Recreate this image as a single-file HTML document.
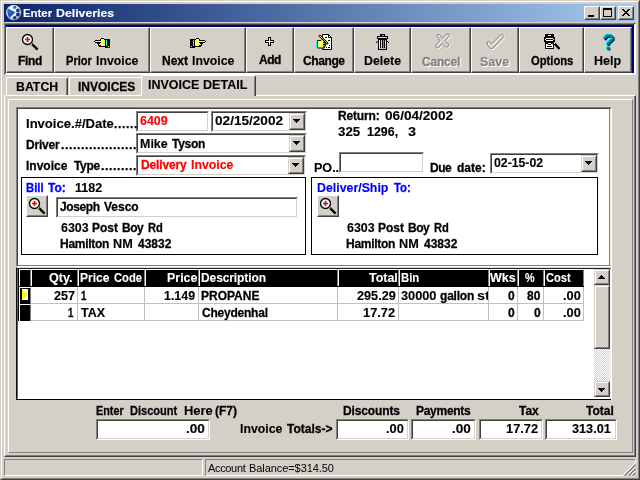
<!DOCTYPE html>
<html><head><meta charset="utf-8"><title>Enter Deliveries</title>
<style>
html,body{margin:0;padding:0;}
body{width:640px;height:480px;overflow:hidden;background:#d4d0c8;position:relative;font-family:"Liberation Sans",sans-serif;font-size:12px;font-weight:bold;color:#000;}
div,span,i,b{position:absolute;box-sizing:border-box;white-space:pre;display:block;}
span{line-height:14px;height:14px;transform-origin:0 0;-webkit-text-stroke:0.12px;}
.tb{top:27px;height:46px;background:#d4d0c8;border-left:1px solid #fff;border-top:1px solid #fff;border-right:1px solid #404040;border-bottom:1px solid #404040;}
.tb:before{content:"";position:absolute;left:0;top:0;right:0;bottom:0;border-right:1px solid #808080;border-bottom:1px solid #808080;}
.dis{text-shadow:1px 1px 0 #fff,1px 1px 0 #fff;}
.cb{width:16px;height:14px;top:6px;background:#d4d0c8;border:1px solid;border-color:#fff #404040 #404040 #fff;}
.cb:before{content:"";position:absolute;left:0;top:0;right:0;bottom:0;border:1px solid;border-color:#d4d0c8 #808080 #808080 #d4d0c8;}
.sunk{border:1px solid;border-color:#808080 #fff #fff #808080;background:#fff;}
.sunk:before{content:"";position:absolute;left:0;top:0;right:0;bottom:0;border:1px solid;border-color:#404040 #d4d0c8 #d4d0c8 #404040;}
.dd{width:16px;background:#d4d0c8;border:1px solid;border-color:#d4d0c8 #404040 #404040 #d4d0c8;}
.dd:before{content:"";position:absolute;left:0;top:0;right:0;bottom:0;border:1px solid;border-color:#fff #808080 #808080 #fff;}
.dd:after{content:"";position:absolute;left:6px;top:9px;width:1px;height:1px;background:#000;box-shadow:-1px -1px #000,0px -1px #000,1px -1px #000,-2px -2px #000,-1px -2px #000,0px -2px #000,1px -2px #000,2px -2px #000,-3px -3px #000,-2px -3px #000,-1px -3px #000,0px -3px #000,1px -3px #000,2px -3px #000,3px -3px #000;}
.th{width:16px;background:#d4d0c8;border:1px solid;border-color:#d4d0c8 #404040 #404040 #d4d0c8;}
.th:before{content:"";position:absolute;left:0;top:0;right:0;bottom:0;border:1px solid;border-color:#fff #808080 #808080 #fff;}
.cd:after{top:8px}
.up:after{top:5px;box-shadow:-1px 1px #000,0px 1px #000,1px 1px #000,-2px 2px #000,-1px 2px #000,0px 2px #000,1px 2px #000,2px 2px #000,-3px 3px #000,-2px 3px #000,-1px 3px #000,0px 3px #000,1px 3px #000,2px 3px #000,3px 3px #000;}
.bx{border:1px solid #000;background:#fff;}
.mb{width:22px;height:22px;background:#d4d0c8;border:1px solid;border-color:#fff #404040 #404040 #fff;}
.mb:before{content:"";position:absolute;left:0;top:0;right:0;bottom:0;border:1px solid;border-color:#d4d0c8 #808080 #808080 #d4d0c8;}
.hc{top:269px;height:18px;background:#000;border-left:1px solid #fff;border-top:1px solid #fff;border-right:1px solid #808080;}
.vl{width:1px;background:#c0c0c0;top:287px;height:34px;}
.hl{height:1px;background:#c0c0c0;left:31px;width:553px;}
</style></head><body>
<!-- window frame -->
<div style="left:0;top:0;width:640px;height:480px;border:1px solid;border-color:#d4d0c8 #404040 #404040 #d4d0c8;"></div>
<div style="left:1px;top:1px;width:638px;height:478px;border:1px solid;border-color:#fff #808080 #808080 #fff;"></div>
<!-- title bar -->
<div style="left:4px;top:4px;width:632px;height:18px;background:linear-gradient(90deg,#0a246a,#a6caf0);"></div>
<svg style="position:absolute;left:5px;top:4px" width="18" height="18" viewBox="5 4 18 18"><defs><radialGradient id="sg" cx="35%" cy="30%" r="75%"><stop offset="0" stop-color="#fff"/><stop offset=".6" stop-color="#e8ecf2"/><stop offset="1" stop-color="#8e98a8"/></radialGradient><linearGradient id="tg" x1="0" y1="0" x2="1" y2="1"><stop offset="0" stop-color="#3a7ada"/><stop offset="1" stop-color="#0c3a96"/></linearGradient></defs><circle cx="13.7" cy="12.6" r="7.6" fill="url(#sg)"/><path d="M7.700 8.300L15.300 12.300L9.300 17.900Q6.200 13 7.700 8.300Z" fill="url(#tg)"/><circle cx="14.700" cy="7.300" r="1.600" fill="#2a68c8"/><circle cx="17.900" cy="10.500" r="1.900" fill="#123f98"/><circle cx="17.900" cy="14.500" r="1.900" fill="#0c3484"/><circle cx="14.700" cy="17.700" r="1.700" fill="#0c3888"/></svg>
<div class="cb" style="left:584px;"><i style="left:3px;top:8px;width:6px;height:2px;background:#000"></i></div>
<div class="cb" style="left:600px;"><i style="left:2px;top:1px;width:9px;height:9px;border:1px solid #000;border-top-width:2px"></i></div>
<div class="cb" style="left:618px;"><svg style="position:absolute;left:3px;top:2px" width="8" height="7" viewBox="0 0 8 7"><path d="M0 0L7 7M1 0L8 7M7 0L0 7M8 0L1 7" stroke="#000" stroke-width="1" shape-rendering="crispEdges" fill="none"/></svg></div>
<!-- toolbar -->
<div style="left:4px;top:23px;width:632px;height:52px;background:#000080;border:2px solid #fff;border-top-color:#404040;border-left-color:#404040;"></div>
<div style="left:4px;top:23px;width:630px;height:1px;background:#808080"></div>
<div style="left:4px;top:23px;width:1px;height:50px;background:#808080"></div>
<div class="tb" style="left:6px;width:48px;"></div>
<div class="tb" style="left:54px;width:96px;"></div>
<div class="tb" style="left:150px;width:96px;"></div>
<div class="tb" style="left:246px;width:48px;"></div>
<div class="tb" style="left:294px;width:60px;"></div>
<div class="tb" style="left:354px;width:57px;"></div>
<div class="tb" style="left:411px;width:60px;"></div>
<div class="tb" style="left:471px;width:48px;"></div>
<div class="tb" style="left:519px;width:65px;"></div>
<div class="tb" style="left:584px;width:48px;"></div>
<!-- tabs -->
<div style="left:6px;top:77px;width:62px;height:18px;border-left:1px solid #fff;border-top:1px solid #fff;border-right:1px solid #404040;border-top-left-radius:2px;border-top-right-radius:2px;"><i style="right:0;top:1px;width:1px;height:17px;background:#808080"></i></div>
<div style="left:69px;top:77px;width:74px;height:18px;border-left:1px solid #fff;border-top:1px solid #fff;border-top-left-radius:2px;"></div>
<!-- tab panel -->
<div style="left:4px;top:95px;width:632px;height:362px;border:1px solid;border-color:#fff #404040 #404040 #fff;"><i style="left:0;top:0;right:0;bottom:0;border-right:1px solid #808080;border-bottom:1px solid #808080"></i></div>
<div style="left:141px;top:75px;width:115px;height:21px;background:#d4d0c8;border-left:1px solid #fff;border-top:1px solid #fff;border-right:1px solid #404040;border-top-left-radius:2px;border-top-right-radius:2px;"><i style="right:0;top:1px;width:1px;height:19px;background:#808080"></i></div>
<!-- inner panel -->
<div style="left:8px;top:99px;width:625px;height:354px;border:1px solid;border-color:#fff #808080 #808080 #fff;"></div>
<!-- upper box -->
<div style="left:16px;top:107px;width:596px;height:160px;background:#fff;border:1px solid;border-color:#808080 #fff #fff #808080;"><i style="left:0;top:0;right:0;bottom:0;border:1px solid;border-color:#404040 #ece9e2 #808080 #404040"></i><i style="right:1px;top:1px;bottom:0px;width:1px;background:#808080"></i></div>
<div class="sunk" style="left:136px;top:111px;width:73px;height:21px"></div>
<div class="sunk" style="left:211px;top:111px;width:96px;height:21px"><div class="dd cd" style="right:1px;top:1px;height:17px"></div></div>
<div class="sunk" style="left:136px;top:133px;width:171px;height:21px"><div class="dd cd" style="right:1px;top:1px;height:17px"></div></div>
<div class="sunk" style="left:136px;top:155px;width:170px;height:21px"><div class="dd cd" style="right:1px;top:1px;height:17px"></div></div>
<div class="sunk" style="left:339px;top:152px;width:85px;height:21px"></div>
<div class="sunk" style="left:490px;top:153px;width:109px;height:21px"><div class="dd cd" style="right:1px;top:1px;height:17px"></div></div>
<div class="bx" style="left:21px;top:177px;width:285px;height:78px"></div>
<div class="bx" style="left:311px;top:177px;width:287px;height:78px"></div>
<div class="mb" style="left:26px;top:195px"></div>
<div class="mb" style="left:317px;top:195px"></div>
<div class="sunk" style="left:56px;top:197px;width:242px;height:21px"></div>
<!-- grid -->
<div style="left:16px;top:267px;width:596px;height:133px;background:#fff;border:1px solid;border-color:#e0ddd6 #fff #000 #101010;"><i style="left:0;top:0;right:0;bottom:0;border:1px solid;border-color:#202020 #f4f2ee #fff #606060"></i><i style="right:-1px;bottom:-1px;width:1px;height:1px;background:#fff"></i></div>
<div style="left:18px;top:269px;width:566px;height:18px;background:#000"></div>
<div style="left:18px;top:287px;width:13px;height:34px;background:#000"></div>
<div class="hc" style="left:19px;width:12px;height:17px"></div>
<div class="hc" style="left:31px;width:47px;height:17px"></div>
<div class="hc" style="left:78px;width:67px;height:17px"></div>
<div class="hc" style="left:145px;width:54px;height:17px"></div>
<div class="hc" style="left:199px;width:139px;height:17px"></div>
<div class="hc" style="left:338px;width:61px;height:17px"></div>
<div class="hc" style="left:399px;width:90px;height:17px"></div>
<div class="hc" style="left:489px;width:29px;height:17px"></div>
<div class="hc" style="left:518px;width:26px;height:17px"></div>
<div class="hc" style="left:544px;width:40px;height:17px"></div>
<div class="hc" style="left:19px;top:287px;width:12px;height:17px"></div>
<div class="hc" style="left:19px;top:304px;width:12px;height:17px"></div>
<div style="left:22px;top:289px;width:6px;height:11px;background:#fff"></div>
<svg style="position:absolute;left:22px;top:289px" width="6" height="11" viewBox="0 0 6 11"><path d="M0 0L6 5.500L0 11Z" fill="#ff0"/></svg>
<div class="vl" style="left:77px"></div><div class="vl" style="left:144px"></div><div class="vl" style="left:198px"></div><div class="vl" style="left:337px"></div><div class="vl" style="left:398px"></div><div class="vl" style="left:488px"></div><div class="vl" style="left:517px"></div><div class="vl" style="left:543px"></div><div class="vl" style="left:583px"></div>
<div class="hl" style="top:303px"></div><div class="hl" style="top:320px"></div>
<!-- scrollbar -->
<div style="left:594px;top:269px;width:16px;height:128px;background:#eae8e4;background-image:conic-gradient(#fff 25%,#d4d0c8 0 50%,#fff 0 75%,#d4d0c8 0);background-size:2px 2px;"></div>
<div class="dd up" style="left:594px;top:269px;height:16px"></div>
<div class="th" style="left:594px;top:285px;height:64px"></div>
<div class="dd" style="left:594px;top:381px;height:16px"></div>
<!-- totals -->
<div class="sunk" style="left:96px;top:419px;width:114px;height:21px"></div>
<div class="sunk" style="left:336px;top:419px;width:73px;height:21px"></div>
<div class="sunk" style="left:411px;top:419px;width:65px;height:21px"></div>
<div class="sunk" style="left:479px;top:419px;width:64px;height:21px"></div>
<div class="sunk" style="left:545px;top:419px;width:72px;height:21px"></div>
<!-- status bar -->
<div style="left:4px;top:459px;width:199px;height:17px;border:1px solid;border-color:#808080 #fff #fff #808080"></div>
<div style="left:205px;top:459px;width:431px;height:17px;border:1px solid;border-color:#808080 #fff #fff #808080"></div>
<svg style="position:absolute;left:623px;top:463px" width="13" height="13" viewBox="0 0 13 13" shape-rendering="crispEdges"><rect x="0" y="0" width="13" height="13" fill="#d4d0c8"/><path d="M12 0L0 12M12 4L4 12M12 8L8 12" stroke="#fff" stroke-width="1"/><path d="M12.5 1.5L1.5 12.5M12.5 2.5L2.5 12.5M12.5 5.5L5.5 12.5M12.5 6.5L6.5 12.5M12.5 9.5L9.5 12.5M12.5 10.5L10.5 12.5" stroke="#808080" stroke-width="1" shape-rendering="auto"/></svg>
<!--ICONS_START-->
<!-- Find magnifier (origin 22,34) -->
<svg style="position:absolute;left:21px;top:33px" width="18" height="18" viewBox="0 0 18 18"><circle cx="6.5" cy="6.5" r="5" fill="#f2f8f8" stroke="#000" stroke-width="1.3"/><path d="M4 6.5H9M6.5 4V9" stroke="#f00" stroke-width="1.6"/><path d="M10.6 10.6L16.6 16.6" stroke="#000" stroke-width="2.4"/><rect x="10" y="10.4" width="1.4" height="1.2" fill="#ff0"/></svg>
<!-- Prior hand (94,38) -->
<svg style="position:absolute;left:94px;top:38px" width="16" height="10" viewBox="0 0 16 10" shape-rendering="crispEdges"><rect x="7" y="0" width="3" height="1" fill="#000"/><rect x="6" y="1" width="1" height="1" fill="#000"/><rect x="7" y="1" width="3" height="1" fill="#ffff60"/><rect x="10" y="1" width="1" height="1" fill="#000"/><rect x="1" y="2" width="6" height="1" fill="#000"/><rect x="7" y="2" width="4" height="1" fill="#ffff60"/><rect x="0" y="3" width="1" height="1" fill="#000"/><rect x="1" y="3" width="10" height="1" fill="#ffff60"/><rect x="1" y="4" width="6" height="1" fill="#000"/><rect x="7" y="4" width="4" height="1" fill="#ffff60"/><rect x="3" y="5" width="3" height="1" fill="#000"/><rect x="6" y="5" width="5" height="1" fill="#ffff60"/><rect x="4" y="6" width="1" height="1" fill="#000"/><rect x="5" y="6" width="6" height="1" fill="#ffff60"/><rect x="4" y="7" width="3" height="1" fill="#000"/><rect x="7" y="7" width="4" height="1" fill="#ffff60"/><rect x="5" y="8" width="6" height="1" fill="#000"/><rect x="11" y="1" width="5" height="9" fill="#000"/><rect x="12" y="2" width="1.400" height="6" fill="#0ff"/><rect x="14" y="8" width="1" height="1" fill="#ff0"/></svg>
<!-- Next hand (190,38) mirrored -->
<svg style="position:absolute;left:190px;top:38px" width="16" height="10" viewBox="0 0 16 10" shape-rendering="crispEdges"><g transform="translate(16,0) scale(-1,1)"><rect x="7" y="0" width="3" height="1" fill="#000"/><rect x="6" y="1" width="1" height="1" fill="#000"/><rect x="7" y="1" width="3" height="1" fill="#ffff60"/><rect x="10" y="1" width="1" height="1" fill="#000"/><rect x="1" y="2" width="6" height="1" fill="#000"/><rect x="7" y="2" width="4" height="1" fill="#ffff60"/><rect x="0" y="3" width="1" height="1" fill="#000"/><rect x="1" y="3" width="10" height="1" fill="#ffff60"/><rect x="1" y="4" width="6" height="1" fill="#000"/><rect x="7" y="4" width="4" height="1" fill="#ffff60"/><rect x="3" y="5" width="3" height="1" fill="#000"/><rect x="6" y="5" width="5" height="1" fill="#ffff60"/><rect x="4" y="6" width="1" height="1" fill="#000"/><rect x="5" y="6" width="6" height="1" fill="#ffff60"/><rect x="4" y="7" width="3" height="1" fill="#000"/><rect x="7" y="7" width="4" height="1" fill="#ffff60"/><rect x="5" y="8" width="6" height="1" fill="#000"/><rect x="11" y="1" width="5" height="9" fill="#000"/><rect x="12" y="2" width="1.400" height="6" fill="#0ff"/><rect x="14" y="8" width="1" height="1" fill="#ff0"/></g></svg>
<!-- Add plus (265,37) -->
<svg style="position:absolute;left:265px;top:37px" width="9" height="9" viewBox="0 0 9 9" shape-rendering="crispEdges"><path d="M3 0h3v3h3v3h-3v3h-3v-3h-3v-3h3z" fill="#000"/><path d="M4 1h1v3h3v1h-3v3h-1v-3h-3v-1h3z" fill="#fff"/></svg>
<!-- Change (315,33) -->
<svg style="position:absolute;left:315px;top:33px" width="18" height="18" viewBox="0 0 18 18"><path d="M7.500 1.500h6l3 3v12h-9z" fill="#fff" stroke="#000" stroke-width="1"/><path d="M13.500 1.500v3h3" fill="none" stroke="#000" stroke-width="1"/><path d="M10 4.500h2M13 7.500h2M14 12.500h1M11 14.500h1M13 14.500h2" stroke="#000" stroke-width="1"/><path d="M2.500 7.500h3.500l1-1h2l1 1v1.500h-1.500v.5h2.500v1.500h-2.500v.5h2v1.500h-2v.5h1v1.500h-7z" fill="#ffff60" stroke="#000" stroke-width="1"/><rect x="1" y="8" width="1.400" height="6.500" fill="#0ff"/><path d="M4.500 2.500l8.500 8.500" stroke="#000" stroke-width="2.200"/><path d="M5 3l7.500 7.500" stroke="#ff0" stroke-width="1" stroke-dasharray="1.200 .5"/><rect x="3.600" y="1.600" width="1.500" height="1.500" fill="#f00"/></svg>
<!-- Delete trash (376,34) -->
<svg style="position:absolute;left:375px;top:34px" width="15" height="16" viewBox="0 0 15 16" shape-rendering="crispEdges"><rect x="5" y="0" width="5" height="2" fill="#000"/><rect x="6.5" y="1" width="2" height=".6" fill="#999"/><rect x="2" y="2" width="11" height="3" fill="#000"/><rect x="3" y="3" width="9" height="1" fill="#ddd"/><rect x="3" y="5" width="9" height="11" fill="#000"/><rect x="4" y="6" width="1" height="9" fill="#fff"/><rect x="6" y="6" width="1" height="9" fill="#ccc"/><rect x="8" y="6" width="1" height="9" fill="#888"/><rect x="10" y="6" width="1" height="9" fill="#ccc"/><rect x="4" y="14" width="7" height="1" fill="#bbb"/><rect x="1" y="8" width="1" height="1" fill="#000"/><rect x="2" y="7" width="1" height="1" fill="#000"/><rect x="13" y="8" width="1" height="1" fill="#000"/><rect x="12" y="7" width="1" height="1" fill="#000"/></svg>
<!-- Cancel X (435,34) -->
<svg style="position:absolute;left:434px;top:33px" width="17" height="17" viewBox="0 0 17 17"><path id="cx" d="M2.5 2.5l1.5-1h1.5l3 4l4-4.5h2.5l.5 1.5l-4.5 5l4 4.5l-1.5 2h-2l-3.5-3.5l-4 4.500l-1.500-.5l-1-2l4.500-5z" fill="none" stroke="#fff" stroke-width="1" transform="translate(1,1)"/><path d="M2.5 2.500l1.500-1h1.500l3 4l4-4.500h2.500l.5 1.500l-4.500 5l4 4.500l-1.500 2h-2l-3.500-3.500l-4 4.500l-1.500-.5l-1-2l4.500-5z" fill="none" stroke="#808080" stroke-width="1"/></svg>
<!-- Save check (487,34) -->
<svg style="position:absolute;left:486px;top:33px" width="19" height="17" viewBox="0 0 19 17"><path d="M1.500 9l1-1l3 3l10-10l1.500 1.500v2l-10.500 11h-2l-3.500-4z" fill="none" stroke="#fff" stroke-width="1" transform="translate(1,1)"/><path d="M1.500 9l1-1l3 3l10-10l1.500 1.500v2l-10.500 11h-2l-3.500-4z" fill="none" stroke="#808080" stroke-width="1"/></svg>
<!-- Options (544,34) -->
<svg style="position:absolute;left:544px;top:34px" width="17" height="16" viewBox="0 0 17 16" shape-rendering="crispEdges"><rect x="1" y="0" width="9" height="15" fill="#000"/><rect x="4" y="1" width="3" height="1" fill="#fff"/><rect x="0" y="3" width="11" height="5" fill="#000"/><rect x="2" y="4" width="7" height="1" fill="#fff"/><rect x="2" y="6" width="7" height="1" fill="#fff"/><rect x="1" y="5" width="1" height="1" fill="#fff"/><rect x="9" y="5" width="1" height="1" fill="#fff"/><rect x="2" y="10" width="7" height="4" fill="#fff"/><rect x="4" y="9" width="3" height="1" fill="#fff"/><rect x="4" y="10" width="3" height="1" fill="#000"/><rect x="3" y="12" width="5" height="1" fill="#000"/><path d="M10.500 9.500L15.500 15" stroke="#000" stroke-width="2.400" shape-rendering="auto"/><rect x="10" y="9" width="1.300" height="1.300" fill="#ff0"/></svg>
<!-- Help ? (603,34) -->
<svg style="position:absolute;left:601px;top:32px" width="16" height="21" viewBox="0 0 16 21"><g fill="none" stroke-linecap="butt" stroke-linejoin="miter"><path d="M3 7l3-3.200h4l1.600 1.700v1.500l-4.600 4.500v2" stroke="#000080" stroke-width="2.600" transform="translate(.8,.8)"/><path d="M3 7l3-3.200h4l1.600 1.700v1.500l-4.600 4.500v2" stroke="#0ff" stroke-width="2.600" transform="translate(-.8,-.8)"/><path d="M3 7l3-3.200h4l1.600 1.700v1.500l-4.600 4.500v2" stroke="#008080" stroke-width="2.400"/></g><rect x="6.600" y="15.600" width="2.800" height="2.800" fill="#000080"/><rect x="5.200" y="14.400" width="2.800" height="2.800" fill="#0ff"/><rect x="5.800" y="15" width="2.800" height="2.800" fill="#008080"/></svg>
<!-- small magnifiers -->
<svg style="position:absolute;left:28px;top:197px" width="18" height="18" viewBox="0 0 18 18"><circle cx="6.5" cy="6.5" r="5" fill="#f2f8f8" stroke="#000" stroke-width="1.3"/><path d="M4 6.5H9M6.5 4V9" stroke="#f00" stroke-width="1.6"/><path d="M10.6 10.6L16.6 16.6" stroke="#000" stroke-width="2.4"/><rect x="10" y="10.4" width="1.4" height="1.2" fill="#ff0"/></svg>
<svg style="position:absolute;left:319px;top:197px" width="18" height="18" viewBox="0 0 18 18"><circle cx="6.5" cy="6.5" r="5" fill="#f2f8f8" stroke="#000" stroke-width="1.3"/><path d="M4 6.5H9M6.5 4V9" stroke="#f00" stroke-width="1.6"/><path d="M10.6 10.6L16.6 16.6" stroke="#000" stroke-width="2.4"/><rect x="10" y="10.4" width="1.4" height="1.2" fill="#ff0"/></svg>
<!--ICONS_END-->
<div style="left:0;top:0;width:640px;height:480px;will-change:transform">
<span style="left:22.96px;top:6px;font-size:11px;font-weight:bold;color:#fff;word-spacing:0px;letter-spacing:0px;transform:scaleX(1.0370)">Enter</span>
<span style="left:55.88px;top:6px;font-size:11px;font-weight:bold;color:#fff;word-spacing:0px;letter-spacing:0px;transform:scaleX(1.1200)">Deliveries</span>
<span style="-webkit-text-stroke:0.27px;left:18.00px;top:54px;font-size:12px;font-weight:bold;color:#000;word-spacing:2px;letter-spacing:-0.333px;transform:scaleX(1.0000)">Find</span>
<span style="-webkit-text-stroke:0.27px;left:66.07px;top:54px;font-size:12px;font-weight:bold;color:#000;word-spacing:2px;letter-spacing:0px;transform:scaleX(0.9259)">Prior</span>
<span style="left:95.97px;top:54px;font-size:12px;font-weight:bold;color:#000;word-spacing:2px;letter-spacing:0px;transform:scaleX(1.0250)">Invoice</span>
<span style="-webkit-text-stroke:0.27px;left:162.00px;top:54px;font-size:12px;font-weight:bold;color:#000;word-spacing:2px;letter-spacing:0px;transform:scaleX(1.0000)">Next</span>
<span style="left:191.97px;top:54px;font-size:12px;font-weight:bold;color:#000;word-spacing:2px;letter-spacing:0px;transform:scaleX(1.0250)">Invoice</span>
<span style="-webkit-text-stroke:0.27px;left:303.00px;top:54px;font-size:12px;font-weight:bold;color:#000;word-spacing:2px;letter-spacing:-0.4px;transform:scaleX(1.0000)">Change</span>
<span style="left:363.97px;top:54px;font-size:12px;font-weight:bold;color:#000;word-spacing:2px;letter-spacing:0px;transform:scaleX(1.0286)">Delete</span>
<span style="-webkit-text-stroke:0.27px;left:531.00px;top:54px;font-size:12px;font-weight:bold;color:#000;word-spacing:2px;letter-spacing:0px;transform:scaleX(0.9333)">Options</span>
<span style="left:593.96px;top:54px;font-size:12px;font-weight:bold;color:#000;word-spacing:2px;letter-spacing:0px;transform:scaleX(1.0400)">Help</span>
<span style="-webkit-text-stroke:0.27px;left:259.00px;top:53px;font-size:12px;font-weight:bold;color:#000;word-spacing:2px;letter-spacing:-0.5px;transform:scaleX(1.0000)">Add</span>
<span class="dis" style="-webkit-text-stroke:0.27px;left:422.00px;top:55px;font-size:12px;font-weight:bold;color:#808080;word-spacing:2px;letter-spacing:-0.2px;transform:scaleX(1.0000)">Cancel</span>
<span class="dis" style="left:479.96px;top:55px;font-size:12px;font-weight:bold;color:#808080;word-spacing:2px;letter-spacing:0px;transform:scaleX(1.0370)">Save</span>
<span style="left:15.97px;top:80px;font-size:12px;font-weight:bold;color:#000;word-spacing:2px;letter-spacing:0px;transform:scaleX(1.0256)">BATCH</span>
<span style="-webkit-text-stroke:0.27px;left:78.00px;top:80px;font-size:12px;font-weight:bold;color:#000;word-spacing:2px;letter-spacing:0px;transform:scaleX(1.0000)">INVOICES</span>
<span style="left:147.96px;top:78px;font-size:12px;font-weight:bold;color:#000;word-spacing:2px;letter-spacing:0px;transform:scaleX(1.0417)">INVOICE</span>
<span style="left:202.95px;top:78px;font-size:12px;font-weight:bold;color:#000;word-spacing:2px;letter-spacing:0px;transform:scaleX(1.0488)">DETAIL</span>
<span style="left:25.91px;top:117px;font-size:12px;font-weight:bold;color:#000;word-spacing:2px;letter-spacing:0px;transform:scaleX(1.0886)">Invoice.#/Date</span>
<span style="-webkit-text-stroke:0.27px;left:114.00px;top:117px;font-size:12px;font-weight:bold;color:#000;word-spacing:2px;letter-spacing:0.67px;transform:scaleX(1.0000)">......</span>
<span style="-webkit-text-stroke:0.27px;left:26.00px;top:138px;font-size:12px;font-weight:bold;color:#000;word-spacing:2px;letter-spacing:-0.2px;transform:scaleX(1.0000)">Driver</span>
<span style="-webkit-text-stroke:0.27px;left:61.00px;top:138px;font-size:12px;font-weight:bold;color:#000;word-spacing:2px;letter-spacing:0.67px;transform:scaleX(1.0000)">...................</span>
<span style="-webkit-text-stroke:0.27px;left:26.00px;top:159px;font-size:12px;font-weight:bold;color:#000;word-spacing:2px;letter-spacing:0px;transform:scaleX(1.0000)">Invoice</span>
<span style="-webkit-text-stroke:0.27px;left:74.00px;top:159px;font-size:12px;font-weight:bold;color:#000;word-spacing:2px;letter-spacing:-0.333px;transform:scaleX(1.0000)">Type</span>
<span style="-webkit-text-stroke:0.27px;left:101.00px;top:159px;font-size:12px;font-weight:bold;color:#000;word-spacing:2px;letter-spacing:0.67px;transform:scaleX(1.0000)">.........</span>
<span style="left:140.00px;top:114px;font-size:12px;font-weight:bold;color:#f00;word-spacing:2px;letter-spacing:0px;transform:scaleX(1.0385)">6409</span>
<span style="left:215.00px;top:114px;font-size:12px;font-weight:bold;color:#000;word-spacing:2px;letter-spacing:0px;transform:scaleX(1.1333)">02/15/2002</span>
<span style="left:139.96px;top:137px;font-size:12px;font-weight:bold;color:#000;word-spacing:2px;letter-spacing:0px;transform:scaleX(1.0400)">Mike</span>
<span style="-webkit-text-stroke:0.27px;left:172.00px;top:137px;font-size:12px;font-weight:bold;color:#000;word-spacing:2px;letter-spacing:-0.25px;transform:scaleX(1.0000)">Tyson</span>
<span style="-webkit-text-stroke:0.27px;left:141.00px;top:158px;font-size:12px;font-weight:bold;color:#f00;word-spacing:2px;letter-spacing:-0.143px;transform:scaleX(1.0000)">Delivery</span>
<span style="left:190.97px;top:158px;font-size:12px;font-weight:bold;color:#f00;word-spacing:2px;letter-spacing:0px;transform:scaleX(1.0250)">Invoice</span>
<span style="-webkit-text-stroke:0.27px;left:338.00px;top:109px;font-size:12px;font-weight:bold;color:#000;word-spacing:2px;letter-spacing:-0.167px;transform:scaleX(1.0000)">Return:</span>
<span style="left:385.00px;top:109px;font-size:12px;font-weight:bold;color:#000;word-spacing:2px;letter-spacing:0px;transform:scaleX(1.1333)">06/04/2002</span>
<span style="left:337.89px;top:125px;font-size:12px;font-weight:bold;color:#000;word-spacing:2px;letter-spacing:0px;transform:scaleX(1.1053)">325</span>
<span style="left:366.96px;top:125px;font-size:12px;font-weight:bold;color:#000;word-spacing:2px;letter-spacing:0px;transform:scaleX(1.0357)">1296,</span>
<span style="left:407.80px;top:125px;font-size:12px;font-weight:bold;color:#000;word-spacing:2px;letter-spacing:0px;transform:scaleX(1.2000)">3</span>
<span style="left:313.95px;top:161px;font-size:12px;font-weight:bold;color:#000;word-spacing:2px;letter-spacing:0px;transform:scaleX(1.0455)">PO..</span>
<span style="-webkit-text-stroke:0.27px;left:430.00px;top:161px;font-size:12px;font-weight:bold;color:#000;word-spacing:2px;letter-spacing:-0.5px;transform:scaleX(1.0000)">Due</span>
<span style="-webkit-text-stroke:0.27px;left:457.00px;top:161px;font-size:12px;font-weight:bold;color:#000;word-spacing:2px;letter-spacing:0px;transform:scaleX(1.0000)">date:</span>
<span style="left:494.00px;top:156px;font-size:12px;font-weight:bold;color:#000;word-spacing:2px;letter-spacing:0px;transform:scaleX(1.0208)">02-15-02</span>
<span style="-webkit-text-stroke:0.27px;left:26.06px;top:181px;font-size:12px;font-weight:bold;color:#00f;word-spacing:2px;letter-spacing:0px;transform:scaleX(0.9412)">Bill</span>
<span style="-webkit-text-stroke:0.27px;left:48.00px;top:181px;font-size:12px;font-weight:bold;color:#00f;word-spacing:2px;letter-spacing:0px;transform:scaleX(1.0000)">To:</span>
<span style="left:74.96px;top:181px;font-size:12px;font-weight:bold;color:#000;word-spacing:2px;letter-spacing:0px;transform:scaleX(1.0400)">1182</span>
<span style="-webkit-text-stroke:0.27px;left:60.00px;top:200px;font-size:12px;font-weight:bold;color:#000;word-spacing:2px;letter-spacing:-0.4px;transform:scaleX(1.0000)">Joseph</span>
<span style="-webkit-text-stroke:0.27px;left:104.00px;top:200px;font-size:12px;font-weight:bold;color:#000;word-spacing:2px;letter-spacing:0px;transform:scaleX(1.0000)">Vesco</span>
<span style="left:61.00px;top:221px;font-size:12px;font-weight:bold;color:#000;word-spacing:2px;letter-spacing:0px;transform:scaleX(1.0385)">6303</span>
<span style="-webkit-text-stroke:0.27px;left:92.00px;top:221px;font-size:12px;font-weight:bold;color:#000;word-spacing:2px;letter-spacing:0px;transform:scaleX(1.0000)">Post</span>
<span style="-webkit-text-stroke:0.27px;left:122.00px;top:221px;font-size:12px;font-weight:bold;color:#000;word-spacing:2px;letter-spacing:-0.5px;transform:scaleX(1.0000)">Boy</span>
<span style="-webkit-text-stroke:0.27px;left:148.07px;top:221px;font-size:12px;font-weight:bold;color:#000;word-spacing:2px;letter-spacing:0px;transform:scaleX(0.9286)">Rd</span>
<span style="-webkit-text-stroke:0.27px;left:60.00px;top:237px;font-size:12px;font-weight:bold;color:#000;word-spacing:2px;letter-spacing:-0.286px;transform:scaleX(1.0000)">Hamilton</span>
<span style="left:112.94px;top:237px;font-size:12px;font-weight:bold;color:#000;word-spacing:2px;letter-spacing:0px;transform:scaleX(1.0588)">NM</span>
<span style="-webkit-text-stroke:0.27px;left:138.00px;top:237px;font-size:12px;font-weight:bold;color:#000;word-spacing:2px;letter-spacing:0px;transform:scaleX(1.0000)">43832</span>
<span style="left:316.97px;top:181px;font-size:12px;font-weight:bold;color:#00f;word-spacing:2px;letter-spacing:0px;transform:scaleX(1.0294)">Deliver/Ship</span>
<span style="-webkit-text-stroke:0.27px;left:394.00px;top:181px;font-size:12px;font-weight:bold;color:#00f;word-spacing:2px;letter-spacing:0px;transform:scaleX(0.9412)">To:</span>
<span style="left:347.00px;top:221px;font-size:12px;font-weight:bold;color:#000;word-spacing:2px;letter-spacing:0px;transform:scaleX(1.0385)">6303</span>
<span style="-webkit-text-stroke:0.27px;left:378.00px;top:221px;font-size:12px;font-weight:bold;color:#000;word-spacing:2px;letter-spacing:0px;transform:scaleX(1.0000)">Post</span>
<span style="-webkit-text-stroke:0.27px;left:408.00px;top:221px;font-size:12px;font-weight:bold;color:#000;word-spacing:2px;letter-spacing:-0.5px;transform:scaleX(1.0000)">Boy</span>
<span style="-webkit-text-stroke:0.27px;left:434.07px;top:221px;font-size:12px;font-weight:bold;color:#000;word-spacing:2px;letter-spacing:0px;transform:scaleX(0.9286)">Rd</span>
<span style="-webkit-text-stroke:0.27px;left:346.00px;top:237px;font-size:12px;font-weight:bold;color:#000;word-spacing:2px;letter-spacing:-0.286px;transform:scaleX(1.0000)">Hamilton</span>
<span style="left:398.94px;top:237px;font-size:12px;font-weight:bold;color:#000;word-spacing:2px;letter-spacing:0px;transform:scaleX(1.0588)">NM</span>
<span style="-webkit-text-stroke:0.27px;left:424.00px;top:237px;font-size:12px;font-weight:bold;color:#000;word-spacing:2px;letter-spacing:0px;transform:scaleX(1.0000)">43832</span>
<span style="left:48.95px;top:271px;font-size:12px;font-weight:bold;color:#fff;word-spacing:2px;letter-spacing:0px;transform:scaleX(1.0476)">Qty.</span>
<span style="-webkit-text-stroke:0.1px;left:80.00px;top:271px;font-size:12px;font-weight:bold;color:#fff;word-spacing:2px;letter-spacing:0px;transform:scaleX(1.0000)">Price</span>
<span style="-webkit-text-stroke:0.1px;left:114.00px;top:271px;font-size:12px;font-weight:bold;color:#fff;word-spacing:2px;letter-spacing:0px;transform:scaleX(0.9333)">Code</span>
<span style="left:166.96px;top:271px;font-size:12px;font-weight:bold;color:#fff;word-spacing:2px;letter-spacing:0px;transform:scaleX(1.0357)">Price</span>
<span style="-webkit-text-stroke:0.1px;left:201.00px;top:271px;font-size:12px;font-weight:bold;color:#fff;word-spacing:2px;letter-spacing:-0.1px;transform:scaleX(1.0000)">Description</span>
<span style="left:369.00px;top:271px;font-size:12px;font-weight:bold;color:#fff;word-spacing:2px;letter-spacing:0px;transform:scaleX(1.0370)">Total</span>
<span style="-webkit-text-stroke:0.1px;left:401.06px;top:271px;font-size:12px;font-weight:bold;color:#fff;word-spacing:2px;letter-spacing:0px;transform:scaleX(0.9444)">Bin</span>
<span style="left:490.00px;top:271px;font-size:12px;font-weight:bold;color:#fff;word-spacing:2px;letter-spacing:0px;transform:scaleX(1.0417)">Wks</span>
<span style="-webkit-text-stroke:0.1px;left:525.00px;top:271px;font-size:12px;font-weight:bold;color:#fff;word-spacing:2px;letter-spacing:0px;transform:scaleX(0.9000)">%</span>
<span style="-webkit-text-stroke:0.1px;left:546.00px;top:271px;font-size:12px;font-weight:bold;color:#fff;word-spacing:2px;letter-spacing:0px;transform:scaleX(0.9259)">Cost</span>
<span style="left:54.00px;top:289px;font-size:12px;font-weight:bold;color:#000;word-spacing:2px;letter-spacing:0px;transform:scaleX(1.0500)">257</span>
<span style="-webkit-text-stroke:0.27px;left:81.20px;top:289px;font-size:12px;font-weight:bold;color:#000;word-spacing:2px;letter-spacing:0px;transform:scaleX(0.8000)">1</span>
<span style="left:163.97px;top:289px;font-size:12px;font-weight:bold;color:#000;word-spacing:2px;letter-spacing:0px;transform:scaleX(1.0345)">1.149</span>
<span style="-webkit-text-stroke:0.27px;left:201.00px;top:289px;font-size:12px;font-weight:bold;color:#000;word-spacing:2px;letter-spacing:0px;transform:scaleX(1.0000)">PROPANE</span>
<span style="left:357.00px;top:289px;font-size:12px;font-weight:bold;color:#000;word-spacing:2px;letter-spacing:0px;transform:scaleX(1.0556)">295.29</span>
<span style="-webkit-text-stroke:0.27px;left:508.00px;top:289px;font-size:12px;font-weight:bold;color:#000;word-spacing:2px;letter-spacing:0px;transform:scaleX(1.0000)">0</span>
<span style="-webkit-text-stroke:0.27px;left:527.00px;top:289px;font-size:12px;font-weight:bold;color:#000;word-spacing:2px;letter-spacing:0px;transform:scaleX(1.0000)">80</span>
<span style="left:562.93px;top:289px;font-size:12px;font-weight:bold;color:#000;word-spacing:2px;letter-spacing:0px;transform:scaleX(1.0667)">.00</span>
<span style="left:400.94px;top:289px;font-size:12px;font-weight:bold;color:#000;word-spacing:2px;letter-spacing:0px;transform:scaleX(1.0625)">30000</span>
<span style="-webkit-text-stroke:0.27px;left:440.00px;top:289px;font-size:12px;font-weight:bold;color:#000;word-spacing:2px;letter-spacing:-0.2px;transform:scaleX(1.0000)">gallon</span>
<div style="left:0;top:0;width:488px;height:480px;overflow:hidden"><span style="left:476.80px;top:289px;font-size:12px;font-weight:bold;color:#000;word-spacing:2px;letter-spacing:0px;transform:scaleX(1.2000)">st</span></div>
<span style="-webkit-text-stroke:0.27px;left:68.20px;top:306px;font-size:12px;font-weight:bold;color:#000;word-spacing:2px;letter-spacing:0px;transform:scaleX(0.8000)">1</span>
<span style="left:81.00px;top:306px;font-size:12px;font-weight:bold;color:#000;word-spacing:2px;letter-spacing:0px;transform:scaleX(1.0435)">TAX</span>
<span style="-webkit-text-stroke:0.27px;left:202.00px;top:306px;font-size:12px;font-weight:bold;color:#000;word-spacing:2px;letter-spacing:-0.222px;transform:scaleX(1.0000)">Cheydenhal</span>
<span style="left:362.93px;top:306px;font-size:12px;font-weight:bold;color:#000;word-spacing:2px;letter-spacing:0px;transform:scaleX(1.0690)">17.72</span>
<span style="-webkit-text-stroke:0.27px;left:508.00px;top:306px;font-size:12px;font-weight:bold;color:#000;word-spacing:2px;letter-spacing:0px;transform:scaleX(1.0000)">0</span>
<span style="-webkit-text-stroke:0.27px;left:534.00px;top:306px;font-size:12px;font-weight:bold;color:#000;word-spacing:2px;letter-spacing:0px;transform:scaleX(1.0000)">0</span>
<span style="left:562.93px;top:306px;font-size:12px;font-weight:bold;color:#000;word-spacing:2px;letter-spacing:0px;transform:scaleX(1.0667)">.00</span>
<span style="-webkit-text-stroke:0.27px;left:96.10px;top:404px;font-size:12px;font-weight:bold;color:#000;word-spacing:2px;letter-spacing:0px;transform:scaleX(0.9000)">Enter</span>
<span style="-webkit-text-stroke:0.27px;left:130.08px;top:404px;font-size:12px;font-weight:bold;color:#000;word-spacing:2px;letter-spacing:0px;transform:scaleX(0.9200)">Discount</span>
<span style="left:183.92px;top:404px;font-size:12px;font-weight:bold;color:#000;word-spacing:2px;letter-spacing:0px;transform:scaleX(1.0800)">Here</span>
<span style="-webkit-text-stroke:0.27px;left:215.00px;top:404px;font-size:12px;font-weight:bold;color:#000;word-spacing:2px;letter-spacing:0px;transform:scaleX(1.0000)">(F7)</span>
<span style="-webkit-text-stroke:0.27px;left:343.00px;top:404px;font-size:12px;font-weight:bold;color:#000;word-spacing:2px;letter-spacing:-0.125px;transform:scaleX(1.0000)">Discounts</span>
<span style="-webkit-text-stroke:0.27px;left:416.00px;top:404px;font-size:12px;font-weight:bold;color:#000;word-spacing:2px;letter-spacing:-0.286px;transform:scaleX(1.0000)">Payments</span>
<span style="-webkit-text-stroke:0.27px;left:519.00px;top:404px;font-size:12px;font-weight:bold;color:#000;word-spacing:2px;letter-spacing:0px;transform:scaleX(1.0000)">Tax</span>
<span style="-webkit-text-stroke:0.27px;left:586.00px;top:404px;font-size:12px;font-weight:bold;color:#000;word-spacing:2px;letter-spacing:0px;transform:scaleX(1.0000)">Total</span>
<span style="left:239.97px;top:422px;font-size:12px;font-weight:bold;color:#000;word-spacing:2px;letter-spacing:0px;transform:scaleX(1.0250)">Invoice</span>
<span style="-webkit-text-stroke:0.27px;left:287.00px;top:422px;font-size:12px;font-weight:bold;color:#000;word-spacing:2px;letter-spacing:0px;transform:scaleX(1.0000)">Totals-&gt;</span>
<span style="left:185.87px;top:422px;font-size:12px;font-weight:bold;color:#000;word-spacing:2px;letter-spacing:0px;transform:scaleX(1.1333)">.00</span>
<span style="left:385.93px;top:422px;font-size:12px;font-weight:bold;color:#000;word-spacing:2px;letter-spacing:0px;transform:scaleX(1.0667)">.00</span>
<span style="left:451.87px;top:422px;font-size:12px;font-weight:bold;color:#000;word-spacing:2px;letter-spacing:0px;transform:scaleX(1.1333)">.00</span>
<span style="left:505.93px;top:422px;font-size:12px;font-weight:bold;color:#000;word-spacing:2px;letter-spacing:0px;transform:scaleX(1.0690)">17.72</span>
<span style="left:571.94px;top:422px;font-size:12px;font-weight:bold;color:#000;word-spacing:2px;letter-spacing:0px;transform:scaleX(1.0571)">313.01</span>
<span style="-webkit-text-stroke:0;left:208.00px;top:461px;font-size:11px;font-weight:normal;color:#000;word-spacing:0px;letter-spacing:-0.333px;transform:scaleX(1.0000)">Account</span>
<span style="-webkit-text-stroke:0;left:249.00px;top:461px;font-size:11px;font-weight:normal;color:#000;word-spacing:0px;letter-spacing:-0.071px;transform:scaleX(1.0000)">Balance=$314.50</span>
</div>
</body></html>
